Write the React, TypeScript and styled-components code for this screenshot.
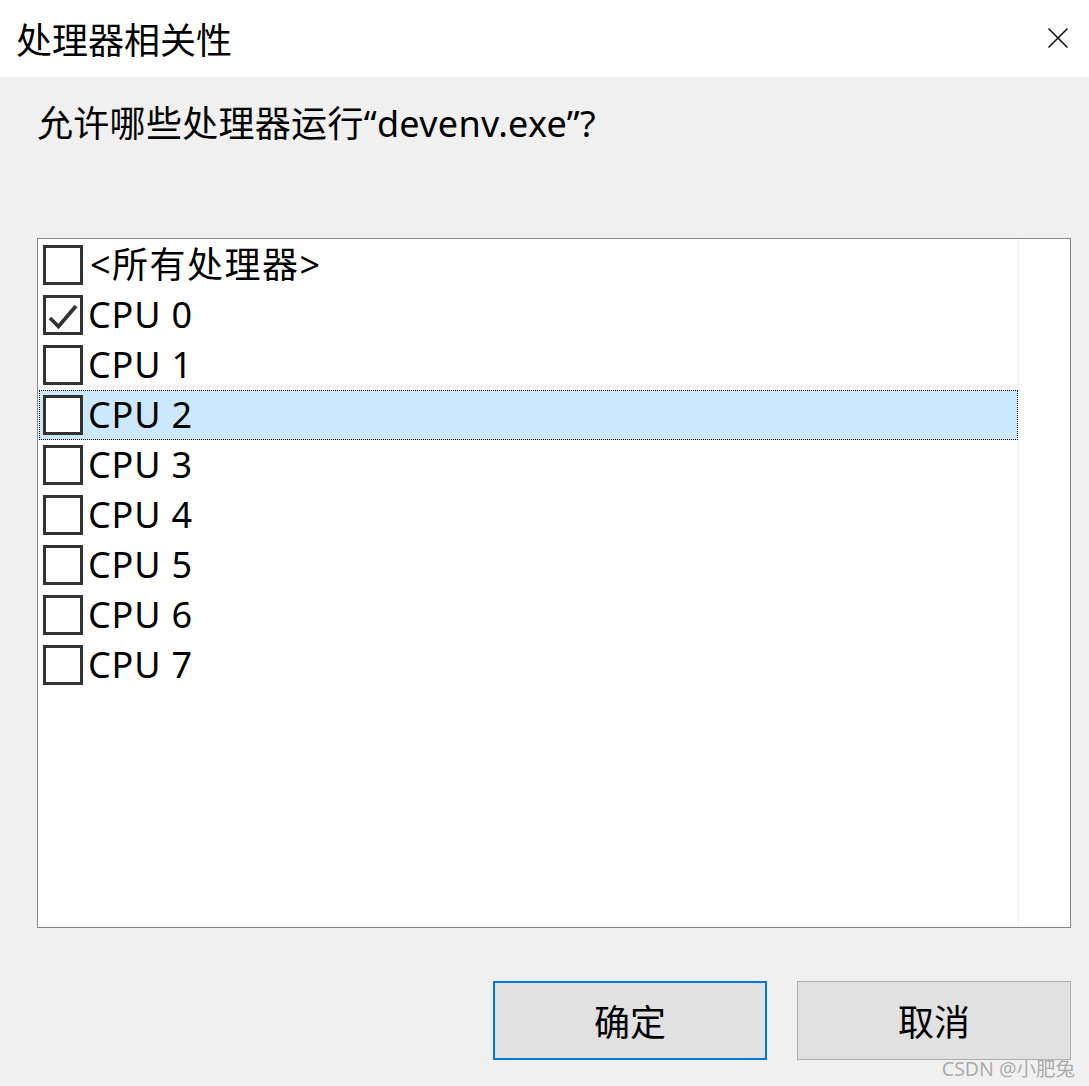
import React from "react";
import styled, { createGlobalStyle } from "styled-components";

const Global = createGlobalStyle`
  html, body { margin: 0; padding: 0; background: #f0f0f0; }
  body { font-family: "Noto Sans", "Noto Sans CJK SC", sans-serif; color: #000; }
`;

const Window = styled.div`
  position: relative;
  width: 1089px;
  height: 1086px;
  background: #f0f0f0;
  display: flex;
  flex-direction: column;
  overflow: hidden;
`;

const TitleBar = styled.div`
  height: 77px;
  background: #fff;
  display: flex;
  align-items: center;
  justify-content: space-between;
  padding: 0 18px 2px 16px;
  box-sizing: border-box;
`;

const Title = styled.div`
  font-family: "Noto Sans CJK SC", sans-serif;
  font-size: 36px;
  line-height: 1;
`;

const CloseButton = styled.div`
  width: 24px;
  height: 24px;
  display: flex;
  align-items: center;
  justify-content: center;
  margin-right: 1px;
`;

const Body = styled.div`
  flex: 1;
  display: flex;
  flex-direction: column;
  padding: 0 18px 0 37px;
`;

const Question = styled.div`
  font-family: "Noto Sans", "Noto Sans CJK SC", sans-serif;
  font-size: 36px;
  line-height: 42px;
  margin-top: 26px;
  height: 42px;
  letter-spacing: 0.3px;
`;

const ListBox = styled.div`
  margin-top: 93px;
  height: 690px;
  border: 1px solid #828790;
  background: #fff;
  box-sizing: border-box;
  display: flex;
`;

const Items = styled.div`
  flex: 1;
  padding: 1px 0 0 1px;
  border-right: 1px solid #eef2f7;
  display: flex;
  flex-direction: column;
`;

const ScrollGap = styled.div`
  width: 51px;
`;

const Row = styled.div<{ $selected?: boolean }>`
  height: 50px;
  box-sizing: border-box;
  display: flex;
  align-items: center;
  padding-left: 3px;
  background: ${(p) => (p.$selected ? "#cce8ff" : "transparent")};
  border: 1px ${(p) => (p.$selected ? "dotted #000" : "solid transparent")};
`;

const Box = styled.div`
  width: 40px;
  height: 40px;
  box-sizing: border-box;
  border: 3px solid #333;
  background: #fff;
  flex: none;
  display: flex;
  align-items: center;
  justify-content: center;
`;

const Label = styled.span<{ $cjk?: boolean }>`
  margin-left: ${(p) => (p.$cjk ? "7px" : "5px")};
  font-size: 36px;
  line-height: 1;
  letter-spacing: ${(p) => (p.$cjk ? "1.5px" : "0.8px")};
  white-space: nowrap;
  font-family: "Noto Sans", "Noto Sans CJK SC", sans-serif;
`;

const Buttons = styled.div`
  margin-top: 53px;
  display: flex;
  justify-content: flex-end;
  gap: 30px;
`;

const Button = styled.div<{ $primary?: boolean }>`
  width: 274px;
  height: 79px;
  box-sizing: border-box;
  background: #e1e1e1;
  border: ${(p) => (p.$primary ? "2px solid #0078d7" : "1px solid #adadad")};
  display: flex;
  align-items: center;
  justify-content: center;
  font-family: "Noto Sans CJK SC", sans-serif;
  font-size: 36px;
  padding-bottom: 2px;
`;

const Watermark = styled.div`
  position: absolute;
  right: 14px;
  bottom: 8px;
  font-family: "Noto Sans", "Noto Sans CJK SC", sans-serif;
  font-size: 19.5px;
  line-height: 1;
  color: #a9a9a9;
  text-shadow: 0 0 1px #fff;
`;

const items = ["<所有处理器>", "CPU 0", "CPU 1", "CPU 2", "CPU 3", "CPU 4", "CPU 5", "CPU 6", "CPU 7"];

export default function App() {
  return (
    <>
      <Global />
      <Window>
        <TitleBar>
          <Title>处理器相关性</Title>
          <CloseButton>
            <svg width="22" height="22" viewBox="0 0 22 22">
              <path d="M1.5 1.5 L20.5 20.5 M20.5 1.5 L1.5 20.5" stroke="#111" strokeWidth="1.6" fill="none" />
            </svg>
          </CloseButton>
        </TitleBar>
        <Body>
          <Question>允许哪些处理器运行“devenv.exe”?</Question>
          <ListBox>
            <Items>
              {items.map((t, i) => (
                <Row key={t} $selected={i === 3}>
                  <Box>
                    {i === 1 && (
                      <svg width="34" height="34" viewBox="0 0 34 34">
                        <path d="M4 20 L12.5 28.5 L30 8" stroke="#333" strokeWidth="3.8" fill="none" />
                      </svg>
                    )}
                  </Box>
                  <Label $cjk={i === 0}>{t}</Label>
                </Row>
              ))}
            </Items>
            <ScrollGap />
          </ListBox>
          <Buttons>
            <Button $primary>确定</Button>
            <Button>取消</Button>
          </Buttons>
        </Body>
        <Watermark>CSDN @小肥兔</Watermark>
      </Window>
    </>
  );
}
